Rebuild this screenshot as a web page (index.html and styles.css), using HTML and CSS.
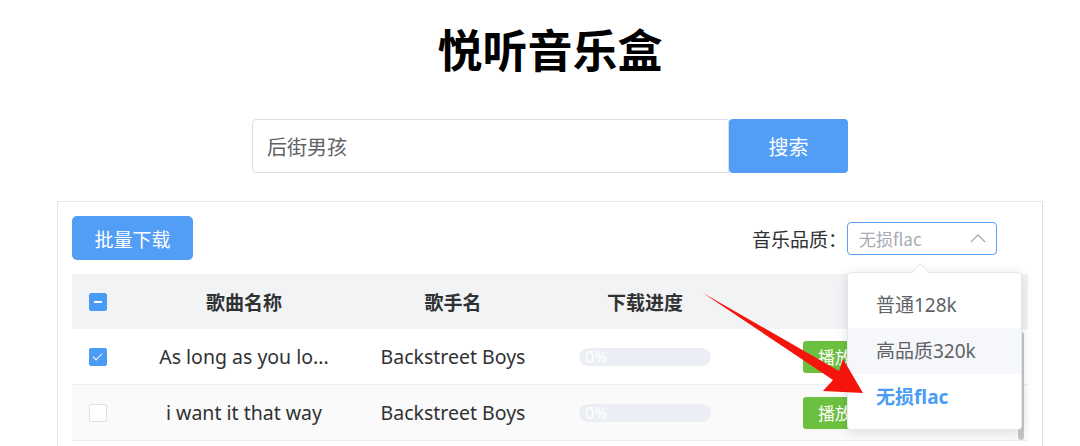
FILE: index.html
```html
<!doctype html>
<html>
  <head>
    <meta charset="utf-8" />
    <title>悦听音乐盒</title>
    <meta name="viewport" content="width=device-width" />
    <link rel="stylesheet" href="styles.css">
  </head>

  <body>
    <div class="app">
      <h1 class="title">悦听音乐盒</h1>

      <div class="search">
        <input class="search-input" type="text" value="后街男孩" />
        <button class="search-btn">搜索</button>
      </div>

      <div class="card">
        <div class="toolbar">
          <button class="btn-batch">批量下载</button>
          <div class="quality">
            <span class="quality-label">音乐品质：</span>
            <div class="select-wrap">
              <div class="select">
                <span class="select-text">无损flac</span>
                <svg class="chevron" width="16" height="10" viewBox="0 0 16 10">
                  <path d="M1 9 L8 2 L15 9" fill="none" stroke="#a8abb2" stroke-width="1.4" />
                </svg>
              </div>
              <ul class="dropdown">
                <li class="option">普通128k</li>
                <li class="option hover">高品质320k</li>
                <li class="option selected">无损flac</li>
              </ul>
            </div>
          </div>
        </div>

        <div class="table">
          <div class="row head">
            <div class="cell"><span class="check half"></span></div>
            <div class="cell">歌曲名称</div>
            <div class="cell">歌手名</div>
            <div class="cell">下载进度</div>
            <div class="cell">操作</div>
          </div>
          <div class="row">
            <div class="cell"><span class="check on"></span></div>
            <div class="cell">As long as you lo...</div>
            <div class="cell">Backstreet Boys</div>
            <div class="cell"><div class="progress"><span>0%</span></div></div>
            <div class="cell ops"><button class="btn-play">播放</button></div>
          </div>
          <div class="row striped">
            <div class="cell"><span class="check"></span></div>
            <div class="cell">i want it that way</div>
            <div class="cell">Backstreet Boys</div>
            <div class="cell"><div class="progress"><span>0%</span></div></div>
            <div class="cell ops"><button class="btn-play">播放</button></div>
          </div>
          <div class="scroll-thumb"></div>
        </div>
      </div>
    </div>

    <svg class="arrow" width="1080" height="446" viewBox="0 0 1080 446">
      <polygon points="703,293 839,371 843,359 863,393 823,391 833,380" fill="#f4140b" />
    </svg>
  </body>
</html>
```

FILE: styles.css
```css
html,
body {
  margin: 0;
  height: 446px;
  overflow: hidden;
}
body {
  position: relative;
  font-family: "Noto Sans", "Noto Sans CJK SC", sans-serif;
  color: #303133;
  background: #fff;
}
.app {
  width: 986px;
  margin-left: 57px;
}
.title {
  margin: 0;
  padding-top: 18px;
  line-height: 62px;
  font-size: 45px;
  font-weight: 700;
  text-align: center;
  color: #000;
  font-family: "Noto Sans CJK SC", sans-serif;
}
.search {
  display: flex;
  justify-content: center;
  margin-top: 39px;
  height: 54px;
}
.search-input {
  box-sizing: border-box;
  width: 477px;
  height: 54px;
  padding: 0 14px;
  border: 1px solid #dcdfe6;
  border-radius: 4px 0 0 4px;
  font-family: "Noto Sans CJK SC", sans-serif;
  font-size: 20px;
  color: #606266;
  outline: none;
}
.search-btn {
  width: 119px;
  height: 54px;
  border: none;
  border-radius: 4px;
  background: #529df6;
  color: #fff;
  font-family: "Noto Sans CJK SC", sans-serif;
  font-size: 20px;
}
.card {
  margin-top: 28px;
  padding: 14px 14px 40px;
  border: 1px solid #e4e7ed;
  border-right-color: #dcdfe6;
}
.toolbar {
  display: flex;
  justify-content: space-between;
  align-items: center;
  height: 44px;
}
.btn-batch {
  width: 121px;
  height: 44px;
  border: none;
  border-radius: 5px;
  background: #529df6;
  color: #fff;
  font-family: "Noto Sans CJK SC", sans-serif;
  font-size: 19px;
}
.quality {
  display: flex;
  align-items: center;
  margin-right: 31px;
}
.quality-label {
  font-family: "Noto Sans CJK SC", sans-serif;
  font-size: 19px;
  color: #303133;
}
.select-wrap {
  position: relative;
}
.select {
  box-sizing: border-box;
  display: flex;
  align-items: center;
  justify-content: space-between;
  width: 150px;
  height: 33px;
  padding: 0 10px 0 11px;
  border: 1px solid #5a9ff0;
  border-radius: 4px;
}
.select-text {
  font-family: "Noto Sans CJK SC", sans-serif;
  font-size: 17px;
  color: #a8abb2;
}
.dropdown {
  position: absolute;
  z-index: 5;
  left: 0;
  top: 50px;
  box-sizing: border-box;
  width: 175px;
  margin: 0;
  padding: 9px 0;
  list-style: none;
  background: #fff;
  border: 1px solid #e4e7ed;
  border-radius: 4px;
  box-shadow: 0 2px 12px rgba(0, 0, 0, 0.12);
}
.dropdown::before {
  content: "";
  position: absolute;
  top: -7px;
  left: 66px;
  width: 12px;
  height: 12px;
  background: #fff;
  border-top: 1px solid #e4e7ed;
  border-left: 1px solid #e4e7ed;
  transform: rotate(45deg);
}
.option {
  height: 46px;
  line-height: 46px;
  padding: 0 28px;
  font-family: "Noto Sans", "Noto Sans CJK SC", sans-serif;
  font-size: 19px;
  color: #606266;
}
.option.hover {
  background: #f5f7fa;
}
.option.selected {
  color: #4a9cf4;
  font-weight: 700;
}
.table {
  position: relative;
  margin-top: 14px;
}
.row {
  display: grid;
  grid-template-columns: 55px 234px 184px 200px 1fr;
  height: 55px;
  border-bottom: 1px solid #ebeef5;
  font-size: 19.5px;
}
.row.head {
  background: #f2f3f5;
  font-family: "Noto Sans CJK SC", sans-serif;
  font-weight: 700;
  font-size: 19px;
  color: #303133;
  border-bottom: none;
}
.row.striped {
  background: #fafafa;
}
.cell {
  display: flex;
  align-items: center;
  justify-content: center;
  white-space: nowrap;
  overflow: hidden;
}
.cell:first-child {
  justify-content: flex-start;
  padding-left: 17px;
}
.cell.ops {
  justify-content: flex-start;
  padding-left: 58px;
}
.check {
  box-sizing: border-box;
  position: relative;
  width: 18px;
  height: 18px;
  border: 1px solid #dcdfe6;
  border-radius: 2px;
  background: #fff;
}
.check.half,
.check.on {
  border-color: #4a9bf5;
  background: #4a9bf5;
}
.check.half::after {
  content: "";
  position: absolute;
  left: 4px;
  top: 7px;
  width: 8px;
  height: 2px;
  background: #fff;
}
.check.on::after {
  content: "";
  position: absolute;
  left: 5px;
  top: 2px;
  width: 4px;
  height: 8px;
  border-right: 1.5px solid #fff;
  border-bottom: 1.5px solid #fff;
  transform: rotate(45deg);
}
.progress {
  width: 132px;
  height: 18px;
  border-radius: 9px;
  background: #ebeef5;
  display: flex;
  align-items: center;
}
.progress span {
  padding-left: 6px;
  font-size: 16px;
  color: #fff;
}
.btn-play {
  height: 32px;
  padding: 0 15px;
  border: none;
  border-radius: 3px;
  background: #6cc03f;
  color: #fff;
  font-family: "Noto Sans CJK SC", sans-serif;
  font-size: 17px;
}
.scroll-thumb {
  position: absolute;
  right: 4px;
  top: 58px;
  width: 6px;
  height: 108px;
  border-radius: 3px;
  background: #c4c6c9;
}
.arrow {
  position: absolute;
  left: 0;
  top: 0;
  z-index: 10;
  pointer-events: none;
}
```
